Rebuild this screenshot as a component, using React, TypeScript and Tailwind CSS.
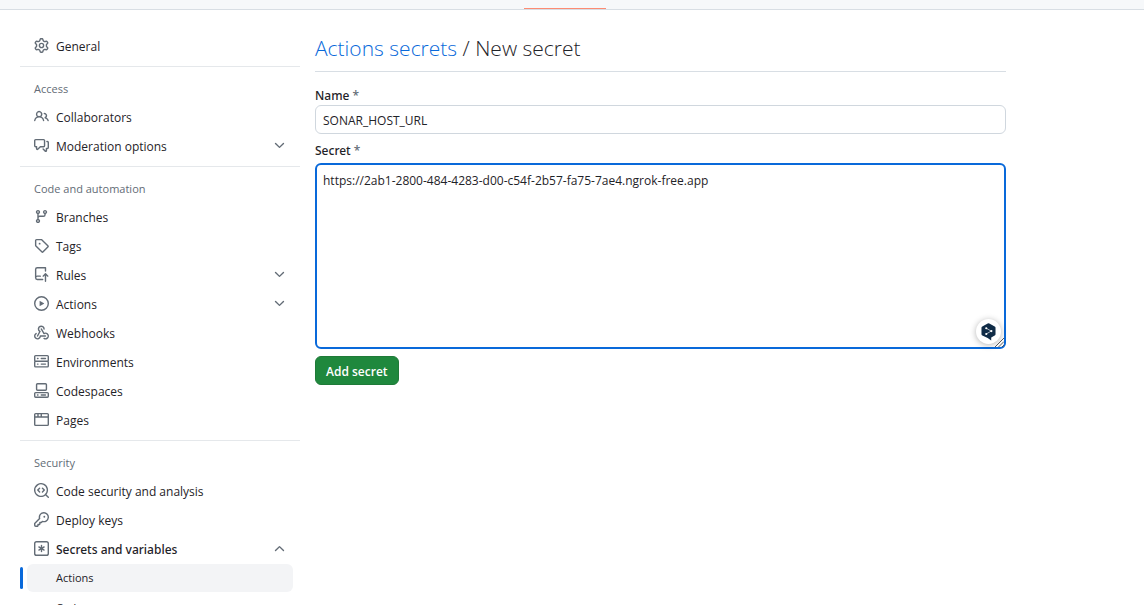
import { useState } from "react";
import type { ReactNode } from "react";

const icons = {
  gear: [
    "M8 0a8.2 8.2 0 0 1 .701.031C9.444.095 9.99.645 10.16 1.29l.288 1.107c.018.066.079.158.212.224.231.114.454.243.668.386.123.082.233.09.299.071l1.103-.303c.644-.176 1.392.021 1.82.63.27.385.506.792.704 1.218.315.675.111 1.422-.364 1.891l-.814.806c-.049.048-.098.147-.088.294.016.257.016.515 0 .772-.01.147.038.246.088.294l.814.806c.475.469.679 1.216.364 1.891a7.977 7.977 0 0 1-.704 1.217c-.428.61-1.176.807-1.82.63l-1.102-.302c-.067-.019-.177-.011-.3.071a5.909 5.909 0 0 1-.668.386c-.133.066-.194.158-.211.224l-.29 1.106c-.168.646-.715 1.196-1.458 1.26a8.006 8.006 0 0 1-1.402 0c-.743-.064-1.289-.614-1.458-1.26l-.289-1.106c-.018-.066-.079-.158-.212-.224a5.738 5.738 0 0 1-.668-.386c-.123-.082-.233-.09-.299-.071l-1.103.303c-.644.176-1.392-.021-1.82-.63a8.12 8.12 0 0 1-.704-1.218c-.315-.675-.111-1.422.363-1.891l.815-.806c.05-.048.098-.147.088-.294a6.214 6.214 0 0 1 0-.772c.01-.147-.038-.246-.088-.294l-.815-.806C.635 6.045.431 5.298.746 4.623a7.92 7.92 0 0 1 .704-1.217c.428-.61 1.176-.807 1.82-.63l1.102.302c.067.019.177.011.3-.071.214-.143.437-.272.668-.386.133-.066.194-.158.211-.224l.29-1.106C6.009.645 6.556.095 7.299.03 7.53.01 7.764 0 8 0Zm-.571 1.525c-.036.003-.108.036-.137.146l-.289 1.105c-.147.561-.549.967-.998 1.189-.173.086-.34.183-.5.29-.417.278-.97.423-1.529.27l-1.103-.303c-.109-.03-.175.016-.195.045-.22.312-.412.644-.573.99-.014.031-.021.11.059.19l.815.806c.411.406.562.957.53 1.456a4.709 4.709 0 0 0 0 .582c.032.499-.119 1.05-.53 1.456l-.815.806c-.081.08-.073.159-.059.19.162.346.353.677.573.989.02.03.085.076.195.046l1.102-.303c.56-.153 1.113-.008 1.53.27.161.107.328.204.501.29.447.222.85.629.997 1.189l.289 1.105c.029.109.101.143.137.146a6.6 6.6 0 0 0 1.142 0c.036-.003.108-.036.137-.146l.289-1.105c.147-.561.549-.967.998-1.189.173-.086.34-.183.5-.29.417-.278.97-.423 1.529-.27l1.103.303c.109.029.175-.016.195-.045.22-.313.411-.644.573-.99.014-.031.021-.11-.059-.19l-.815-.806c-.411-.406-.562-.957-.53-1.456a4.709 4.709 0 0 0 0-.582c-.032-.499.119-1.05.53-1.456l.815-.806c.081-.08.073-.159.059-.19a6.464 6.464 0 0 0-.573-.989c-.02-.03-.085-.076-.195-.046l-1.102.303c-.56.153-1.113.008-1.53-.27a4.44 4.44 0 0 0-.501-.29c-.447-.222-.85-.629-.997-1.189l-.289-1.105c-.029-.11-.101-.143-.137-.146a6.6 6.6 0 0 0-1.142 0ZM11 8a3 3 0 1 1-6 0 3 3 0 0 1 6 0ZM9.5 8a1.5 1.5 0 1 0-3.001.001A1.5 1.5 0 0 0 9.5 8Z",
  ],
  people: [
    "M2 5.5a3.5 3.5 0 1 1 5.898 2.549 5.508 5.508 0 0 1 3.034 4.084.75.75 0 1 1-1.482.235 4 4 0 0 0-7.9 0 .75.75 0 0 1-1.482-.236A5.507 5.507 0 0 1 3.102 8.05 3.493 3.493 0 0 1 2 5.5ZM11 4a3.001 3.001 0 0 1 2.22 5.018 5.01 5.01 0 0 1 2.56 3.012.749.749 0 0 1-.885.954.752.752 0 0 1-.549-.514 3.507 3.507 0 0 0-2.522-2.372.75.75 0 0 1-.574-.73v-.352a.75.75 0 0 1 .416-.672A1.5 1.5 0 0 0 11 5.5.75.75 0 0 1 11 4Zm-5.5-.5a2 2 0 1 0-.001 3.999A2 2 0 0 0 5.5 3.5Z",
  ],
  discussion: [
    "M1.75 1h8.5c.966 0 1.75.784 1.75 1.75v5.5A1.75 1.75 0 0 1 10.25 10H7.061l-2.574 2.573A1.458 1.458 0 0 1 2 11.543V10h-.25A1.75 1.75 0 0 1 0 8.25v-5.5C0 1.784.784 1 1.75 1ZM1.5 2.75v5.5c0 .138.112.25.25.25h1a.75.75 0 0 1 .75.75v2.19l2.72-2.72a.749.749 0 0 1 .53-.22h3.5a.25.25 0 0 0 .25-.25v-5.5a.25.25 0 0 0-.25-.25h-8.5a.25.25 0 0 0-.25.25Zm13 2a.25.25 0 0 0-.25-.25h-.5a.75.75 0 0 1 0-1.5h.5c.966 0 1.75.784 1.75 1.75v5.5A1.75 1.75 0 0 1 14.25 12H14v1.543a1.458 1.458 0 0 1-2.487 1.03L9.22 12.28a.749.749 0 0 1 .326-1.275.749.749 0 0 1 .734.215l2.22 2.22v-2.19a.75.75 0 0 1 .75-.75h1a.25.25 0 0 0 .25-.25Z",
  ],
  branch: [
    "M9.5 3.25a2.25 2.25 0 1 1 3 2.122V6A2.5 2.5 0 0 1 10 8.5H6a1 1 0 0 0-1 1v1.128a2.251 2.251 0 1 1-1.5 0V5.372a2.25 2.25 0 1 1 1.5 0v1.836A2.493 2.493 0 0 1 6 7h4a1 1 0 0 0 1-1v-.628A2.25 2.25 0 0 1 9.5 3.25Zm-6 0a.75.75 0 1 0 1.5 0 .75.75 0 0 0-1.5 0Zm8.25-.75a.75.75 0 1 0 0 1.5.75.75 0 0 0 0-1.5ZM4.25 12a.75.75 0 1 0 0 1.5.75.75 0 0 0 0-1.5Z",
  ],
  tag: [
    "M1 7.775V2.75C1 1.784 1.784 1 2.75 1h5.025c.464 0 .91.184 1.238.513l6.25 6.25a1.75 1.75 0 0 1 0 2.474l-5.026 5.026a1.75 1.75 0 0 1-2.474 0l-6.25-6.25A1.752 1.752 0 0 1 1 7.775Zm1.5 0c0 .066.026.13.073.177l6.25 6.25a.25.25 0 0 0 .354 0l5.025-5.025a.25.25 0 0 0 0-.354l-6.25-6.25a.25.25 0 0 0-.177-.073H2.75a.25.25 0 0 0-.25.25ZM6 5a1 1 0 1 1 0 2 1 1 0 0 1 0-2Z",
  ],
  push: [
    "M1 2.5A2.5 2.5 0 0 1 3.5 0h8.75a.75.75 0 0 1 .75.75v3.5a.75.75 0 0 1-1.5 0V1.5h-8a1 1 0 0 0-1 1v6.708A2.493 2.493 0 0 1 3.5 9h3.25a.75.75 0 0 1 0 1.5H3.5a1 1 0 0 0 0 2h5.75a.75.75 0 0 1 0 1.5H3.5A2.5 2.5 0 0 1 1 11.5Zm13.23 7.79-1.23-1.224v6.184a.75.75 0 0 1-1.5 0V9.066L10.28 10.28a.75.75 0 0 1-1.06-1.06l2.505-2.504a.75.75 0 0 1 1.06 0L15.29 9.22a.751.751 0 0 1-.018 1.042.751.751 0 0 1-1.042.018Z",
  ],
  play: [
    "M8 0a8 8 0 1 1 0 16A8 8 0 0 1 8 0ZM1.5 8a6.5 6.5 0 1 0 13 0 6.5 6.5 0 0 0-13 0Zm4.879-2.773 4.264 2.559a.25.25 0 0 1 0 .428l-4.264 2.559A.25.25 0 0 1 6 10.559V5.442a.25.25 0 0 1 .379-.215Z",
  ],
  webhook: [
    "M5.5 4.25a2.25 2.25 0 0 1 4.5 0 .75.75 0 0 0 1.5 0 3.75 3.75 0 1 0-6.14 2.889l-2.272 4.258a.75.75 0 0 0 1.324.706L7 7.25a.75.75 0 0 0-.309-1.015A2.25 2.25 0 0 1 5.5 4.25Z",
    "M7.364 3.607a.75.75 0 0 1 1.03.257l2.608 4.349a3.75 3.75 0 1 1-.628 6.785.75.75 0 0 1 .752-1.299 2.25 2.25 0 1 0-.033-3.88.75.75 0 0 1-1.03-.256L7.107 4.636a.75.75 0 0 1 .257-1.03Z",
    "M2.9 8.776A.75.75 0 0 1 2.625 9.8 2.25 2.25 0 1 0 6 11.75a.75.75 0 0 1 .75-.751h5.5a.75.75 0 0 1 0 1.5H7.425a3.751 3.751 0 1 1-5.55-3.998.75.75 0 0 1 1.024.274Z",
  ],
  server: [
    "M1.75 1h12.5c.966 0 1.75.784 1.75 1.75v4c0 .372-.116.717-.314 1 .198.283.314.628.314 1v4a1.75 1.75 0 0 1-1.75 1.75H1.75A1.75 1.75 0 0 1 0 12.75v-4c0-.358.109-.707.314-1a1.739 1.739 0 0 1-.314-1v-4C0 1.784.784 1 1.75 1ZM1.5 2.75v4c0 .138.112.25.25.25h12.5a.25.25 0 0 0 .25-.25v-4a.25.25 0 0 0-.25-.25H1.75a.25.25 0 0 0-.25.25Zm.25 5.75a.25.25 0 0 0-.25.25v4c0 .138.112.25.25.25h12.5a.25.25 0 0 0 .25-.25v-4a.25.25 0 0 0-.25-.25ZM7 4.75A.75.75 0 0 1 7.75 4h4.5a.75.75 0 0 1 0 1.5h-4.5A.75.75 0 0 1 7 4.75ZM7.75 10h4.5a.75.75 0 0 1 0 1.5h-4.5a.75.75 0 0 1 0-1.5ZM3 4.75A.75.75 0 0 1 3.75 4h.5a.75.75 0 0 1 0 1.5h-.5A.75.75 0 0 1 3 4.75ZM3.75 10h.5a.75.75 0 0 1 0 1.5h-.5a.75.75 0 0 1 0-1.5Z",
  ],
  codespaces: [
    "M0 11.25c0-.966.784-1.75 1.75-1.75h12.5c.966 0 1.75.784 1.75 1.75v3A1.75 1.75 0 0 1 14.25 16H1.75A1.75 1.75 0 0 1 0 14.25Zm2-9.5C2 .784 2.784 0 3.75 0h8.5C13.216 0 14 .784 14 1.75v5a1.75 1.75 0 0 1-1.75 1.75h-8.5A1.75 1.75 0 0 1 2 6.75Zm1.75-.25a.25.25 0 0 0-.25.25v5c0 .138.112.25.25.25h8.5a.25.25 0 0 0 .25-.25v-5a.25.25 0 0 0-.25-.25Zm-2 9.5a.25.25 0 0 0-.25.25v3c0 .138.112.25.25.25h12.5a.25.25 0 0 0 .25-.25v-3a.25.25 0 0 0-.25-.25Z",
    "M7 12.75a.75.75 0 0 1 .75-.75h4.5a.75.75 0 0 1 0 1.5h-4.5a.75.75 0 0 1-.75-.75Zm-4 0a.75.75 0 0 1 .75-.75h.5a.75.75 0 0 1 0 1.5h-.5a.75.75 0 0 1-.75-.75Z",
  ],
  browser: [
    "M0 2.75C0 1.784.784 1 1.75 1h12.5c.966 0 1.75.784 1.75 1.75v10.5A1.75 1.75 0 0 1 14.25 15H1.75A1.75 1.75 0 0 1 0 13.25ZM14.5 6h-13v7.25c0 .138.112.25.25.25h12.5a.25.25 0 0 0 .25-.25Zm-6-3.5v2h6V2.75a.25.25 0 0 0-.25-.25ZM5 2.5v2h2v-2Zm-3.25 0a.25.25 0 0 0-.25.25V4.5h2v-2Z",
  ],
  codescan: [
    "M8.47 4.97a.75.75 0 0 0 0 1.06L9.94 7.5 8.47 8.97a.75.75 0 1 0 1.06 1.06l2-2a.75.75 0 0 0 0-1.06l-2-2a.75.75 0 0 0-1.06 0ZM6.53 6.03a.75.75 0 0 0-1.06-1.06l-2 2a.75.75 0 0 0 0 1.06l2 2a.75.75 0 1 0 1.06-1.06L5.06 7.5l1.47-1.47Z",
    "M12.246 13.307a7.501 7.501 0 1 1 1.06-1.06l2.474 2.473a.749.749 0 1 1-1.06 1.06l-2.474-2.473ZM1.5 7.5a6.002 6.002 0 0 0 3.608 5.504 6.002 6.002 0 0 0 6.486-1.117.748.748 0 0 1 .292-.293A6 6 0 1 0 1.5 7.5Z",
  ],
  key: [
    "M10.5 0a5.499 5.499 0 1 1-1.288 10.848l-.932.932a.749.749 0 0 1-.53.22H7v.75a.749.749 0 0 1-.22.53l-.5.5a.749.749 0 0 1-.53.22H5v.75a.749.749 0 0 1-.22.53l-.5.5a.749.749 0 0 1-.53.22h-2A1.75 1.75 0 0 1 0 14.25v-2c0-.199.079-.389.22-.53l4.932-4.932A5.5 5.5 0 0 1 10.5 0Zm-4 5.5c-.001.431.069.86.205 1.269a.75.75 0 0 1-.181.768L1.5 12.56v1.69c0 .138.112.25.25.25h1.69l.06-.06v-1.19a.75.75 0 0 1 .75-.75h1.19l.06-.06v-1.19a.75.75 0 0 1 .75-.75h1.19l1.023-1.025a.75.75 0 0 1 .768-.18A4 4 0 1 0 6.5 5.5ZM11 6a1 1 0 1 1 0-2 1 1 0 0 1 0 2Z",
  ],
  asterisk: [
    "M0 2.75A2.75 2.75 0 0 1 2.75 0h10.5A2.75 2.75 0 0 1 16 2.75v10.5A2.75 2.75 0 0 1 13.25 16H2.75A2.75 2.75 0 0 1 0 13.25ZM2.75 1.5c-.69 0-1.25.56-1.25 1.25v10.5c0 .69.56 1.25 1.25 1.25h10.5c.69 0 1.25-.56 1.25-1.25V2.75c0-.69-.56-1.25-1.25-1.25Z",
    "M8 4a.75.75 0 0 1 .75.75V6.7l1.69-.975a.75.75 0 0 1 .75 1.3L9.5 8l1.69.976a.75.75 0 0 1-.75 1.298L8.75 9.3v1.951a.75.75 0 0 1-1.5 0V9.299l-1.69.976a.75.75 0 0 1-.75-1.3L6.5 8l-1.69-.975a.75.75 0 0 1 .75-1.3l1.69.976V4.75A.75.75 0 0 1 8 4Z",
  ],
  chevron: [
    "M12.78 5.22a.749.749 0 0 1 0 1.06l-4.25 4.25a.749.749 0 0 1-1.06 0L3.22 6.28a.749.749 0 1 1 1.06-1.06L8 8.939l3.72-3.719a.749.749 0 0 1 1.06 0Z",
  ],
};

type IconName = keyof typeof icons;

function Icon({ name, className = "" }: { name: IconName; className?: string }) {
  return (
    <svg viewBox="0 0 16 16" aria-hidden="true" className={`mb-0.5 size-[15px] shrink-0 fill-[#636c76] ${className}`}>
      {icons[name].map((d) => (
        <path key={d} d={d} />
      ))}
    </svg>
  );
}

const rowClass = "flex h-[29px] w-full items-center gap-[7px] pr-[13px] pl-[14px] text-left";

function NavLink({ icon, children }: { icon: IconName; children: ReactNode }) {
  return (
    <li>
      <a href="#" className={rowClass}>
        <Icon name={icon} />
        <span>{children}</span>
      </a>
    </li>
  );
}

function NavGroup({ icon, label, items = [] }: { icon: IconName; label: string; items?: string[] }) {
  const [open, setOpen] = useState(items.length > 0);
  return (
    <li>
      <button
        type="button"
        aria-expanded={open}
        onClick={() => setOpen(!open)}
        className={`${rowClass} ${open ? "font-['Noto_Sans',sans-serif] font-medium" : ""}`}
      >
        <Icon name={icon} />
        <span className="flex-1">{label}</span>
        <Icon name="chevron" className={open ? "rotate-180" : ""} />
      </button>
      {open && (
        <ul className="flex flex-col gap-0.5">
          {items.map((item, i) => (
            <li key={item} className="flex h-7 items-center gap-1">
              <span className={`h-[22px] w-[3px] rounded-sm ${i === 0 ? "bg-[#0969da]" : ""}`} />
              <a
                href="#"
                aria-current={i === 0 ? "page" : undefined}
                className={`mr-[7px] flex h-7 flex-1 items-center rounded-md pl-[29px] text-[11px] ${i === 0 ? "bg-[#f3f4f6]" : ""}`}
              >
                {item}
              </a>
            </li>
          ))}
        </ul>
      )}
    </li>
  );
}

function NavSection({ title, children }: { title: string; children: ReactNode }) {
  return (
    <section className="border-t border-[#e5e8eb] pb-[5px]">
      <h2 className="flex h-9 items-center pt-2 pl-[14px] text-[11px] text-[#636c76]">{title}</h2>
      <ul>{children}</ul>
    </section>
  );
}

function AssistantBadge() {
  return (
    <button
      type="button"
      aria-label="Translate"
      className="absolute right-[5px] bottom-[5px] flex size-[25px] items-center justify-center rounded-full bg-white shadow-[0_1px_6px_rgba(0,0,0,0.3)]"
    >
      <svg viewBox="0 0 16 20" className="h-[18px] w-[15px]" aria-hidden="true">
        <path
          d="M7.1.5a1.8 1.8 0 0 1 1.8 0l6 3.4a1.7 1.7 0 0 1 .9 1.5v7a1.7 1.7 0 0 1-.9 1.5L11 16.2V19.5L7.1 16.8 1.1 13.9a1.7 1.7 0 0 1-.9-1.5v-7a1.7 1.7 0 0 1 .9-1.5Z"
          fill="#0f2b46"
        />
        <path d="M5.500 5.800 11 9 5.500 12.200" stroke="white" strokeWidth="0.7" fill="none" />
        <circle cx="5.5" cy="5.8" r="1.2" fill="white" />
        <circle cx="11.2" cy="9" r="1.2" fill="white" />
        <circle cx="5.5" cy="12.2" r="1.2" fill="white" />
      </svg>
    </button>
  );
}

function ResizeGrip() {
  return (
    <svg
      viewBox="0 0 9 9"
      className="pointer-events-none absolute right-0.5 bottom-0.5 size-[9px]"
      stroke="#4a4a4a"
      strokeWidth="0.9"
      aria-hidden="true"
    >
      <path d="M0 9 9 0M3.500 9 9 3.500M7 9 9 7" />
    </svg>
  );
}

const labelClass = "font-['Noto_Sans',sans-serif] font-medium";

export default function App() {
  const [name, setName] = useState("SONAR_HOST_URL");
  const [secret, setSecret] = useState("https://2ab1-2800-484-4283-d00-c54f-2b57-fa75-7ae4.ngrok-free.app");

  return (
    <div className="h-screen overflow-hidden bg-white font-['Open_Sans','Noto_Sans',sans-serif] text-[12px] leading-[18px] text-[#1f2328]">
      <header className="flex h-[10px] items-end border-b border-[#d8dee4] bg-[#f6f8fa] pl-[524px]">
        <span className="h-px w-[82px] bg-[#fd8c73]" />
      </header>

      <div className="flex items-start gap-[15px] pt-[22px] pl-5">
        <nav aria-label="Settings" className="w-[280px] shrink-0">
          <ul className="pb-[5px]">
            <NavLink icon="gear">General</NavLink>
          </ul>
          <NavSection title="Access">
            <NavLink icon="people">Collaborators</NavLink>
            <NavGroup icon="discussion" label="Moderation options" />
          </NavSection>
          <NavSection title="Code and automation">
            <NavLink icon="branch">Branches</NavLink>
            <NavLink icon="tag">Tags</NavLink>
            <NavGroup icon="push" label="Rules" />
            <NavGroup icon="play" label="Actions" />
            <NavLink icon="webhook">Webhooks</NavLink>
            <NavLink icon="server">Environments</NavLink>
            <NavLink icon="codespaces">Codespaces</NavLink>
            <NavLink icon="browser">Pages</NavLink>
          </NavSection>
          <NavSection title="Security">
            <NavLink icon="codescan">Code security and analysis</NavLink>
            <NavLink icon="key">Deploy keys</NavLink>
            <NavGroup icon="asterisk" label="Secrets and variables" items={["Actions", "Codespaces"]} />
          </NavSection>
        </nav>

        <main className="mr-[138px] min-w-0 flex-1">
          <h1 className="border-b border-[#d8dee4] pb-[7px] text-[21px] leading-8 font-light">
            <a href="#" className="text-[#0969da]">
              Actions secrets
            </a>{" "}
            / New secret
          </h1>

          <form className="flex flex-col items-start pt-[15px]" onSubmit={(e) => e.preventDefault()}>
            <label htmlFor="secret-name" className={labelClass}>
              Name <span className="text-[#636c76]">*</span>
            </label>
            <input
              id="secret-name"
              value={name}
              onChange={(e) => setName(e.target.value)}
              className="h-[29px] w-full rounded-md border border-[#d0d7de] px-[7px] pt-0.5 outline-none"
            />
            <label htmlFor="secret-value" className={`pt-2 pb-[3px] ${labelClass}`}>
              Secret <span className="text-[#636c76]">*</span>
            </label>
            <div className="relative flex w-full">
              <textarea
                id="secret-value"
                value={secret}
                onChange={(e) => setSecret(e.target.value)}
                className="h-[186px] w-full resize-none rounded-md border-2 border-[#0969da] px-[6px] py-[7px] outline-none"
              />
              <ResizeGrip />
              <AssistantBadge />
            </div>
            <button
              type="submit"
              className="mt-[7px] h-[29px] rounded-md border border-[#1f7a38] bg-[#1f883d] px-[10px] pt-0.5 font-semibold text-white"
            >
              Add secret
            </button>
          </form>
        </main>
      </div>
    </div>
  );
}
